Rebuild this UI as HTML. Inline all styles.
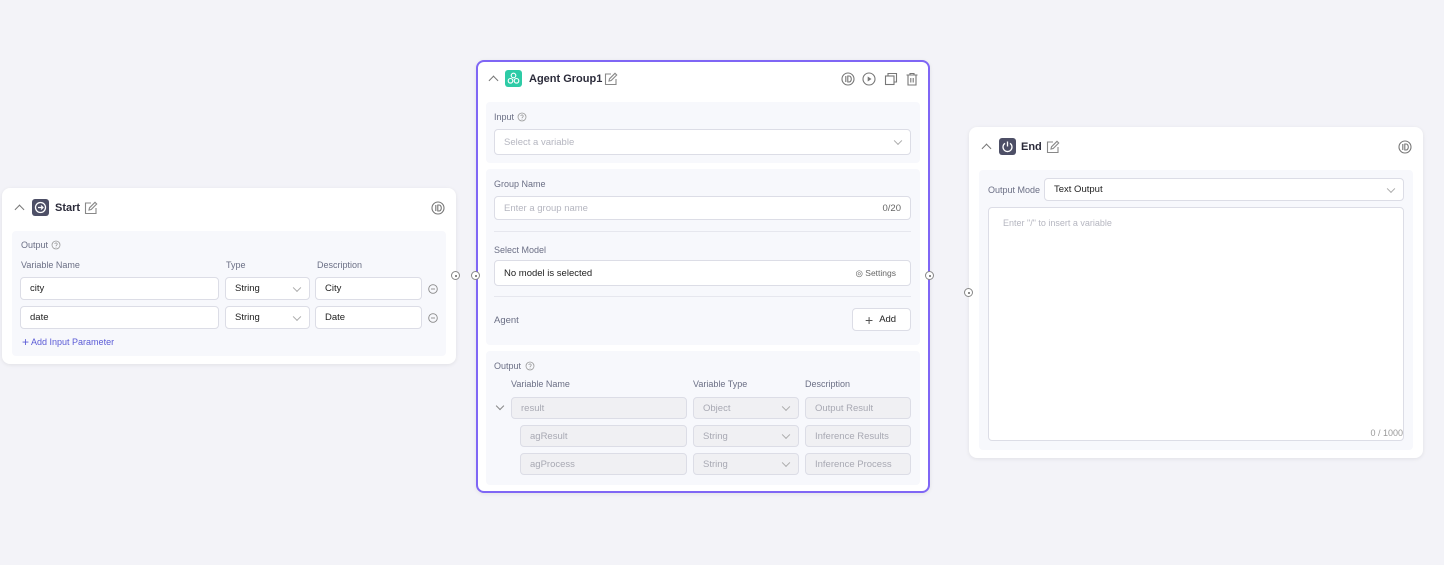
<!DOCTYPE html>
<html><head><meta charset="utf-8"><style>
*{box-sizing:border-box;margin:0;padding:0}
body{width:1444px;height:565px;background:#f3f3f8;font-family:"Liberation Sans",sans-serif;position:relative;overflow:hidden;color:#333}
.a{position:absolute}
.card{position:absolute;background:#fff;border-radius:8px;box-shadow:0 1px 4px rgba(0,0,0,.08)}
.panel{position:absolute;background:#f7f8fc;border-radius:4px}
.lbl{position:absolute;font-size:9px;color:#6b6f85}
.inp{position:absolute;background:#fff;border:1px solid #dcdde6;border-radius:4px;font-size:9.5px;color:#222;padding-left:9px;display:flex;align-items:center}
.dis{background:#f0f0f3;color:#a8a9b3}
.ph{color:#b5b6c0}
.chev{position:absolute;right:9px;top:50%;width:6px;height:6px;border-right:1px solid #aaa;border-bottom:1px solid #aaa;transform:translateY(-70%) rotate(45deg)}
.title{position:absolute;font-size:11px;font-weight:bold;color:#2b2b3a}
.up{position:absolute;width:7px;height:7px;border-left:1.3px solid #777;border-top:1.3px solid #777;transform:rotate(45deg)}
.handle{position:absolute;width:9px;height:9px;border-radius:50%;border:1px solid #888;background:#fff}
.handle:after{content:"";position:absolute;left:2.5px;top:2.5px;width:2px;height:2px;border-radius:50%;background:#666}
.divl{position:absolute;height:1px;background:#e6e7ee}
</style></head><body>
<svg width="0" height="0" style="position:absolute"><defs>
<symbol id="edit" viewBox="0 0 14 14"><path d="M12 7v5.5H1.5V2H7" fill="none" stroke="#888" stroke-width="1.1"/><path d="M5 9l.5-2.2L11 1.3l1.7 1.7L7.2 8.5z" fill="none" stroke="#888" stroke-width="1.1"/></symbol>
<symbol id="idi" viewBox="0 0 14 14"><circle cx="7" cy="7" r="6" fill="none" stroke="#777" stroke-width="1.1"/><path d="M4.8 4v6M6.8 4h1.3a2.2 3 0 010 6H6.8z" fill="none" stroke="#777" stroke-width="1.1"/></symbol>
<symbol id="q" viewBox="0 0 10 10"><circle cx="5" cy="5" r="4" fill="none" stroke="#999" stroke-width=".8"/><path d="M3.8 4a1.2 1.2 0 112 1c-.6.4-.8.6-.8 1.2" fill="none" stroke="#999" stroke-width=".8"/><circle cx="5" cy="7.3" r=".4" fill="#999"/></symbol>
<symbol id="minus" viewBox="0 0 10 10"><circle cx="5" cy="5" r="4.3" fill="none" stroke="#888" stroke-width=".9"/><path d="M3 5h4" stroke="#888" stroke-width=".9"/></symbol>
</defs></svg>

<!-- Start -->
<div class="card" style="left:2px;top:188px;width:454px;height:176px"></div>
<div class="up" style="left:16px;top:206px"></div>
<div class="a" style="left:32px;top:199px;width:17px;height:17px;border-radius:3px;background:#4d4f66"><svg width="17" height="17" viewBox="0 0 17 17"><circle cx="8.5" cy="8.5" r="5" fill="none" stroke="#fff" stroke-width="1.3"/><path d="M6 8.5h5M9 6.5l2 2-2 2" fill="none" stroke="#fff" stroke-width="1.2"/></svg></div>
<div class="title" style="left:55px;top:202px">Start</div>
<svg class="a" style="left:84px;top:201px" width="14" height="14"><use href="#edit"/></svg>
<svg class="a" style="left:431px;top:201px" width="14" height="14"><use href="#idi"/></svg>
<div class="panel" style="left:12px;top:231px;width:434px;height:125px"></div>
<div class="lbl" style="left:21px;top:240px">Output</div>
<svg class="a" style="left:51px;top:240px" width="10" height="10"><use href="#q"/></svg>
<div class="lbl" style="left:21px;top:260px">Variable Name</div>
<div class="lbl" style="left:226px;top:260px">Type</div>
<div class="lbl" style="left:317px;top:260px">Description</div>
<div class="inp" style="left:20px;top:277px;width:199px;height:23px">city</div>
<div class="inp" style="left:225px;top:277px;width:85px;height:23px">String<i class="chev"></i></div>
<div class="inp" style="left:315px;top:277px;width:107px;height:23px">City</div>
<svg class="a" style="left:428px;top:284px" width="10" height="10"><use href="#minus"/></svg>
<div class="inp" style="left:20px;top:306px;width:199px;height:23px">date</div>
<div class="inp" style="left:225px;top:306px;width:85px;height:23px">String<i class="chev"></i></div>
<div class="inp" style="left:315px;top:306px;width:107px;height:23px">Date</div>
<svg class="a" style="left:428px;top:313px" width="10" height="10"><use href="#minus"/></svg>
<div class="a" style="left:22px;top:335px;font-size:9px;color:#5b5bd6"><span style="font-size:12px;vertical-align:-1px">+</span> Add Input Parameter</div>

<!-- Agent group -->
<div class="card" style="left:476px;top:60px;width:454px;height:433px;border:2px solid #7f66f5"></div>
<div class="up" style="left:490px;top:77px"></div>
<div class="a" style="left:505px;top:70px;width:17px;height:17px;border-radius:3px;background:#2ecba6"><svg width="17" height="17" viewBox="0 0 17 17"><g fill="none" stroke="#fff" stroke-width="1.1"><circle cx="8.5" cy="5.5" r="2.3"/><circle cx="5.5" cy="10.8" r="2.3"/><circle cx="11.5" cy="10.8" r="2.3"/></g></svg></div>
<div class="title" style="left:529px;top:73px">Agent Group1</div>
<svg class="a" style="left:604px;top:72px" width="14" height="14"><use href="#edit"/></svg>
<svg class="a" style="left:841px;top:72px" width="14" height="14"><use href="#idi"/></svg>
<svg class="a" style="left:862px;top:72px" width="14" height="14" viewBox="0 0 14 14"><circle cx="7" cy="7" r="6" fill="none" stroke="#777" stroke-width="1.1"/><path d="M5.7 4.5v5l3.8-2.5z" fill="#777"/></svg>
<svg class="a" style="left:884px;top:72px" width="14" height="14" viewBox="0 0 14 14"><rect x="1.5" y="4" width="8.5" height="8.5" fill="none" stroke="#777" stroke-width="1.1"/><path d="M4 4V1.5h8.5V10H10" fill="none" stroke="#777" stroke-width="1.1"/></svg>
<svg class="a" style="left:905px;top:72px" width="14" height="14" viewBox="0 0 14 14"><path d="M1.5 3h11M5 3V1.5h4V3M3 3v10h8V3M5.8 6v4.5M8.2 6v4.5" fill="none" stroke="#777" stroke-width="1.1"/></svg>
<div class="panel" style="left:486px;top:102px;width:434px;height:61px"></div>
<div class="lbl" style="left:494px;top:112px">Input</div>
<svg class="a" style="left:517px;top:112px" width="10" height="10"><use href="#q"/></svg>
<div class="inp ph" style="left:494px;top:129px;width:417px;height:26px">Select a variable<i class="chev"></i></div>
<div class="panel" style="left:486px;top:169px;width:434px;height:176px"></div>
<div class="lbl" style="left:494px;top:179px">Group Name</div>
<div class="inp ph" style="left:494px;top:196px;width:417px;height:24px">Enter a group name<span style="position:absolute;right:9px;color:#666">0/20</span></div>
<div class="divl" style="left:494px;top:231px;width:417px"></div>
<div class="lbl" style="left:494px;top:245px">Select Model</div>
<div class="inp" style="left:494px;top:260px;width:417px;height:26px">No model is selected<span style="position:absolute;right:14px;color:#666;font-size:8.5px">◎ Settings</span></div>
<div class="divl" style="left:494px;top:296px;width:417px"></div>
<div class="lbl" style="left:494px;top:315px;font-size:9.5px">Agent</div>
<div class="inp" style="left:852px;top:308px;width:59px;height:23px;padding-left:12px;font-size:9.5px"><span style="font-size:14px;color:#555;margin-right:6px;font-weight:300">+</span>Add</div>
<div class="panel" style="left:486px;top:351px;width:434px;height:134px"></div>
<div class="lbl" style="left:494px;top:361px">Output</div>
<svg class="a" style="left:525px;top:361px" width="10" height="10"><use href="#q"/></svg>
<div class="lbl" style="left:511px;top:379px">Variable Name</div>
<div class="lbl" style="left:693px;top:379px">Variable Type</div>
<div class="lbl" style="left:805px;top:379px">Description</div>
<div class="a" style="left:497px;top:403px;width:6px;height:6px;border-right:1px solid #888;border-bottom:1px solid #888;transform:rotate(45deg)"></div>
<div class="inp dis" style="left:511px;top:397px;width:176px;height:22px">result</div>
<div class="inp dis" style="left:693px;top:397px;width:106px;height:22px">Object<i class="chev"></i></div>
<div class="inp dis" style="left:805px;top:397px;width:106px;height:22px">Output Result</div>
<div class="inp dis" style="left:520px;top:425px;width:167px;height:22px">agResult</div>
<div class="inp dis" style="left:693px;top:425px;width:106px;height:22px">String<i class="chev"></i></div>
<div class="inp dis" style="left:805px;top:425px;width:106px;height:22px">Inference Results</div>
<div class="inp dis" style="left:520px;top:453px;width:167px;height:22px">agProcess</div>
<div class="inp dis" style="left:693px;top:453px;width:106px;height:22px">String<i class="chev"></i></div>
<div class="inp dis" style="left:805px;top:453px;width:106px;height:22px">Inference Process</div>

<!-- End -->
<div class="card" style="left:969px;top:127px;width:454px;height:331px"></div>
<div class="up" style="left:983px;top:145px"></div>
<div class="a" style="left:999px;top:138px;width:17px;height:17px;border-radius:3px;background:#4d4f66"><svg width="17" height="17" viewBox="0 0 17 17"><path d="M6 5.3a4.5 4.5 0 105 0" fill="none" stroke="#fff" stroke-width="1.3"/><path d="M8.5 3.5v5" stroke="#fff" stroke-width="1.3"/></svg></div>
<div class="title" style="left:1021px;top:141px">End</div>
<svg class="a" style="left:1046px;top:140px" width="14" height="14"><use href="#edit"/></svg>
<svg class="a" style="left:1398px;top:140px" width="14" height="14"><use href="#idi"/></svg>
<div class="panel" style="left:979px;top:170px;width:434px;height:280px"></div>
<div class="lbl" style="left:988px;top:185px">Output Mode</div>
<div class="inp" style="left:1044px;top:178px;width:360px;height:23px">Text Output<i class="chev"></i></div>
<div class="inp" style="left:988px;top:207px;width:416px;height:234px;align-items:flex-start;padding:10px 14px;font-size:9px;color:#b5b6c0">Enter "/" to insert a variable<span style="position:absolute;right:0;bottom:2px;color:#999">0 / 1000</span></div>

<div class="handle" style="left:451px;top:271px"></div>
<div class="handle" style="left:471px;top:271px"></div>
<div class="handle" style="left:925px;top:271px"></div>
<div class="handle" style="left:964px;top:288px"></div>
</body></html>
